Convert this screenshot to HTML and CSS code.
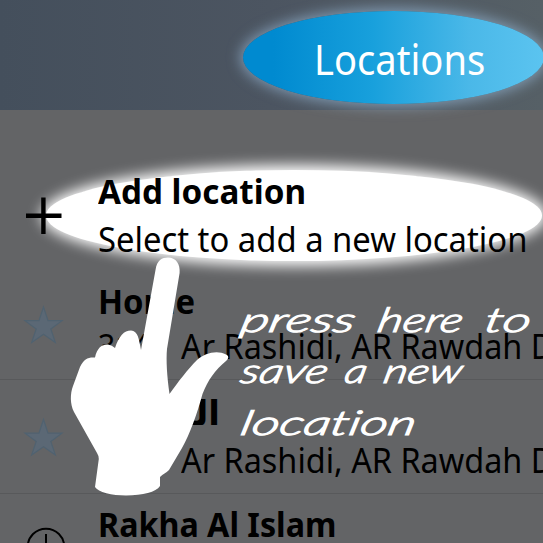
FILE: index.html
```
<!DOCTYPE html>
<html lang="en">
<head>
<meta charset="utf-8">
<title>Locations</title>
<link rel="stylesheet" href="styles.css">
</head>
<body>
<div class="screen">
  <header class="header"><h1 class="title">Locations</h1></header>
  <main class="list">
    <section class="row row-add">
      <svg class="icon" viewBox="0 0 98 114"><path d="M26 63.700H61.500M43.400 45.500V82" stroke="#000" stroke-width="4.4"/></svg>
      <div class="text">
        <h2 class="name add-name">Add location</h2>
        <p class="detail add-detail">Select to add a new location</p>
      </div>
    </section>
    <section class="row">
      <svg class="icon" viewBox="0 0 98 114"><path class="star" d="M43.500 41L48 54.700H62L50.800 63L55.300 76.400L43.500 68.200L31.700 76.400L36.200 63L25 54.700H39Z"/></svg>
      <div class="text">
        <h2 class="name home-name">Home</h2>
        <p class="detail address"><span class="number"><span class="digits">3140</span></span><span class="street">Ar Rashidi, AR Rawdah D</span></p>
      </div>
    </section>
    <section class="row">
      <svg class="icon" viewBox="0 0 98 114"><path class="star" d="M43.500 39.500L48 53.200H62L50.800 61.500L55.300 74.900L43.500 66.700L31.700 74.900L36.200 61.500L25 53.200H39Z"/></svg>
      <div class="text">
        <h2 class="name arabic" lang="ar" dir="rtl">الروضة</h2>
        <p class="detail address"><span class="number"><span class="digits">3140</span></span><span class="street">Ar Rashidi, AR Rawdah D</span></p>
      </div>
    </section>
    <section class="row row-last">
      <svg class="icon" viewBox="0 0 98 114"><circle cx="46" cy="53" r="18.300" fill="none" stroke="#000" stroke-width="2"/><path d="M46 40V54H55" fill="none" stroke="#000" stroke-width="2"/></svg>
      <div class="text"><h2 class="name last-name">Rakha Al Islam</h2></div>
    </section>
  </main>
  <svg class="guide" viewBox="0 0 543 543">
    <path fill="#fff" d="M141 350L155.500 270C157 260 162 257.500 168 257.500C176 257.500 180.500 264 179.600 273L167 349C166 360 167 376 169.500 394C178 382 188 369 197 360C205 353 217 350 226 354.500C229 356 229 358 226 361C215 370 208 380 202.500 394C197 414 190 434 182 448L169 470C166 473 163 474 160 477V486C156 492 143 495.500 126 495.500C112 495.500 98 492 95 487L98.800 459Q99 456 97 453L74 412C70 404 70 394 73 386L80 367C84 359 88 357 95 357.500C97 347 103 344 108 344.500Q112 345 115 348C119 336 124 330.500 131 330.500C138 331 139 339 141 350Z"/>
    <g class="note">
      <text transform="translate(239 332) skewX(-12)" textLength="114" lengthAdjust="spacingAndGlyphs">press</text>
      <text transform="translate(376 332) skewX(-12)" textLength="85" lengthAdjust="spacingAndGlyphs">here</text>
      <text transform="translate(483 332) skewX(-12)" textLength="46" lengthAdjust="spacingAndGlyphs">to</text>
      <text transform="translate(239 383) skewX(-12)" textLength="87" lengthAdjust="spacingAndGlyphs">save</text>
      <text transform="translate(343 383) skewX(-12)" textLength="22" lengthAdjust="spacingAndGlyphs">a</text>
      <text transform="translate(382 383) skewX(-12)" textLength="78" lengthAdjust="spacingAndGlyphs">new</text>
      <text transform="translate(239 435) skewX(-12)" textLength="175" lengthAdjust="spacingAndGlyphs">location</text>
    </g>
  </svg>
</div>
</body>
</html>
```
FILE: styles.css
```
* { box-sizing: border-box; margin: 0; padding: 0; }
body { background: #636466; font-family: "Noto Sans", "Open Sans", sans-serif; }
.screen { position: relative; z-index: 0; width: 543px; height: 543px; overflow: hidden; background: #636466; color: #000; }
.header { position: relative; height: 110px; padding: 35px 0 0 314px; background: linear-gradient(90deg, #444f5c, #4c5561 50%, #566066); }
.header::before { content: ""; position: absolute; left: 243px; top: 11px; width: 301px; height: 93px; border-radius: 50%; background: linear-gradient(90deg, #008ad0 10%, #18a0dc 43%, #4ab8e8 75%, #5bc4f0); box-shadow: 0 0 13px 3px rgba(150, 185, 215, .65); }
.title { position: relative; width: max-content; color: #fff; font-size: 41px; line-height: 48px; font-weight: 400; transform-origin: 0 0; transform: scaleX(.93); }
.list { padding-top: 42px; }
.row { display: flex; height: 114px; border-bottom: 1px solid #58595b; }
.row-add { position: relative; border-bottom-color: transparent; }
.row-add::before { content: ""; position: absolute; z-index: -1; left: 46px; top: 18px; width: 496px; height: 91px; border-radius: 50%; background: #fff; box-shadow: 0 0 14px 5px #fff; }
.icon { width: 98px; height: 114px; flex: none; }
.star { fill: #5b6875; stroke: #506270; stroke-width: 1.2; }
.text { display: flex; flex-direction: column; padding-top: 12px; }
.row-add .text { padding-top: 16px; gap: 2px; }
.row-last .text { padding-top: 7px; }
.name, .detail { width: max-content; white-space: nowrap; line-height: 46px; transform-origin: 0 0; }
.name { font-size: 34px; font-weight: 700; }
.detail { font-size: 34px; font-weight: 400; }
.add-name { transform: scaleX(.977); }
.add-detail { transform: scaleX(.965); }
.home-name { transform: scaleX(.965); }
.last-name { transform: scaleX(.948); }
.arabic { width: 122px; margin-top: -2px; font-family: "DejaVu Sans", sans-serif; }
.address { display: flex; margin-top: -1px; }
.arabic + .address { margin-top: 1px; }
.number { width: 83px; }
.digits { display: inline-block; transform-origin: 0 0; transform: scaleX(.89); }
.street { transform-origin: 0 0; transform: scaleX(.953); }
.guide { position: absolute; inset: 0; width: 543px; height: 543px; }
.note { fill: #fff; stroke: #fff; stroke-width: 1.1; font: italic 300 34px Lato, sans-serif; font-variant-ligatures: none; }
```
